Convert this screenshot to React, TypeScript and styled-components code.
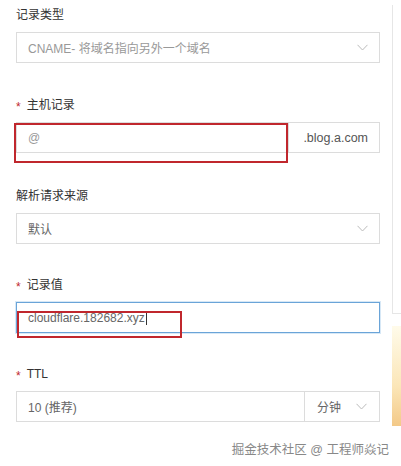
import { createGlobalStyle } from "styled-components";
import styled from "styled-components";

const GlobalStyle = createGlobalStyle`
  html, body {
    margin: 0;
    padding: 0;
    background: #fff;
  }
  body {
    font-family: "Liberation Sans", "Noto Sans CJK SC", sans-serif;
    color: #333;
  }
`;

const Chevron = () => (
  <svg width="11" height="7" viewBox="0 0 11 7" fill="none">
    <path d="M0.5 0.8 L5.5 6 L10.5 0.8" stroke="#bbb" strokeWidth="1" />
  </svg>
);

type FieldProps = {
  label: string;
  required?: boolean;
  gap: number;
  children: React.ReactNode;
};

const Field = ({ label, required, gap, children }: FieldProps) => (
  <FieldWrapper $gap={gap}>
    <Label>
      {required && <Star>*</Star>}
      {label}
    </Label>
    {children}
  </FieldWrapper>
);

const App = () => (
  <>
    <GlobalStyle />
    <Page>
      <Form>
        <Field label="记录类型" gap={0}>
          <Box>
            <Value $muted>CNAME- 将域名指向另外一个域名</Value>
            <Arrow>
              <Chevron />
            </Arrow>
          </Box>
        </Field>

        <Field label="主机记录" required gap={34}>
          <Box>
            <Value $muted>@</Value>
            <Addon $width={91}>.blog.a.com</Addon>
            <Highlight $left={-3} $top={0} $width={274} $height={40} />
          </Box>
        </Field>

        <Field label="解析请求来源" gap={35}>
          <Box>
            <Value>默认</Value>
            <Arrow>
              <Chevron />
            </Arrow>
          </Box>
        </Field>

        <Field label="记录值" required gap={33}>
          <Box $focused>
            <Value>
              cloudflare.182682.xyz<Caret />
            </Value>
            <Highlight $left={0} $top={8} $width={165} $height={27} />
          </Box>
        </Field>

        <Field label="TTL" required gap={33}>
          <Box>
            <Value>10 (推荐)</Value>
            <Unit>
              分钟
              <Chevron />
            </Unit>
          </Box>
        </Field>
      </Form>

      <Side>
        <SidePanel />
        <Glow />
      </Side>

      <Watermark>掘金技术社区 @ 工程师焱记</Watermark>
    </Page>
  </>
);

const Page = styled.div`
  position: relative;
  width: 401px;
  height: 466px;
  overflow: hidden;
  display: flex;
`;

const Form = styled.div`
  width: 364px;
  padding: 7px 0 0 16px;
  display: flex;
  flex-direction: column;
`;

const FieldWrapper = styled.div<{ $gap: number }>`
  margin-top: ${p => p.$gap}px;
  display: flex;
  flex-direction: column;
  gap: 8px;
`;

const Label = styled.div`
  height: 17px;
  font-size: 12px;
  line-height: 17px;
  color: #333;
  display: flex;
  align-items: center;
`;

const Star = styled.span`
  color: #c0272d;
  font-size: 12px;
  margin-right: 6px;
  position: relative;
  top: 2px;
`;

const Box = styled.div<{ $focused?: boolean }>`
  position: relative;
  height: 31px;
  box-sizing: border-box;
  border: 1px solid ${p => (p.$focused ? "#6aa4d8" : "#dcdcdc")};
  box-shadow: ${p => (p.$focused ? "0 0 0 1px #d7e8f6" : "none")};
  display: flex;
  align-items: stretch;
  background: #fff;
`;

const Value = styled.div<{ $muted?: boolean }>`
  flex: 1;
  display: flex;
  align-items: center;
  padding-left: 11px;
  font-size: 12px;
  color: ${p => (p.$muted ? "#999" : "#666")};
  white-space: nowrap;
`;

const Caret = styled.span`
  display: inline-block;
  width: 1px;
  height: 14px;
  background: #333;
  margin-left: 1px;
`;

const Arrow = styled.div`
  width: 34px;
  display: flex;
  align-items: center;
  justify-content: center;
`;

const Addon = styled.div<{ $width: number }>`
  width: ${p => p.$width}px;
  border-left: 1px solid #dcdcdc;
  display: flex;
  align-items: center;
  justify-content: flex-end;
  padding-right: 11px;
  box-sizing: border-box;
  font-size: 12.5px;
  color: #555;
`;

const Unit = styled.div`
  width: 75px;
  box-sizing: border-box;
  border-left: 1px solid #dcdcdc;
  display: flex;
  align-items: center;
  justify-content: space-between;
  padding: 0 12px 0 12px;
  font-size: 12px;
  color: #666;
`;

const Highlight = styled.div<{
  $left: number;
  $top: number;
  $width: number;
  $height: number;
}>`
  position: absolute;
  left: ${p => p.$left}px;
  top: ${p => p.$top}px;
  width: ${p => p.$width}px;
  height: ${p => p.$height}px;
  box-sizing: border-box;
  border: 2px solid #c0272d;
  pointer-events: none;
`;

const Side = styled.div`
  margin-left: 12px;
  width: 9px;
  display: flex;
  flex-direction: column;
`;

const SidePanel = styled.div`
  margin-top: 5px;
  height: 308px;
  border-left: 1px solid #e6e6e6;
  border-bottom: 1px solid #e6e6e6;
`;

const Glow = styled.div`
  margin-top: 12px;
  height: 100px;
  background: linear-gradient(180deg, #fffbea 0%, #fbe6b8 60%, #f3c988 100%);
`;

const Watermark = styled.div`
  position: absolute;
  right: 12px;
  top: 439px;
  font-size: 12.5px;
  color: #888;
`;

export default App;
